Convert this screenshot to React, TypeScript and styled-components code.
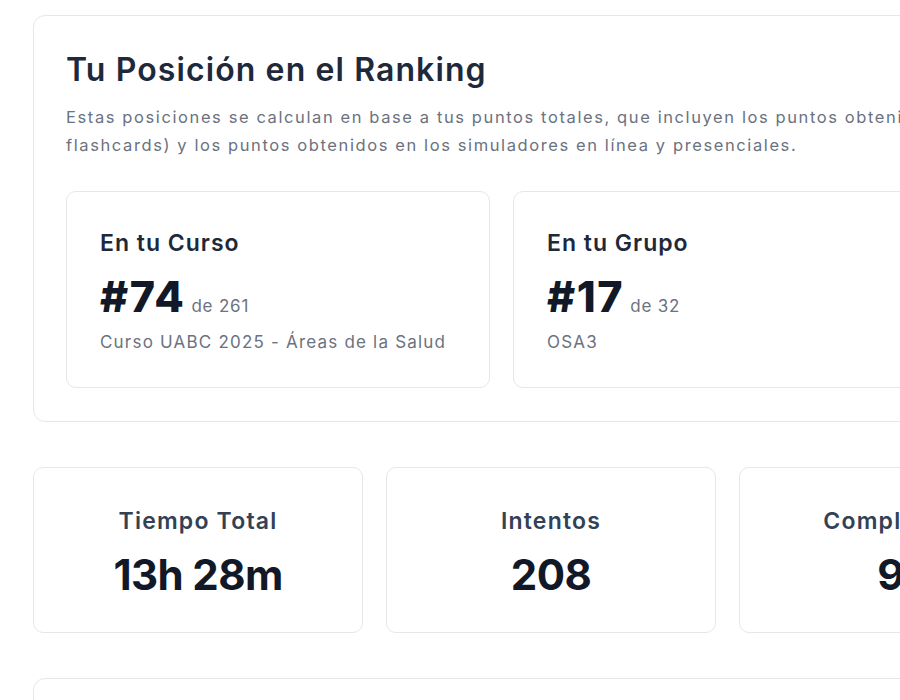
import React from "react";
import styled, { createGlobalStyle } from "styled-components";

const GlobalStyle = createGlobalStyle`
  html, body {
    margin: 0;
    padding: 0;
    background: #ffffff;
    overflow: hidden;
    font-family: "Inter", "Noto Sans", sans-serif;
    color: #1e293b;
  }
`;

const Page = styled.main`
  width: 1100px;
  padding: 15px 0 0 33px;
  display: flex;
  flex-direction: column;
  gap: 45px;
`;

const Panel = styled.section<{ $height?: number }>`
  width: 937px;
  box-sizing: border-box;
  border: 1px solid #e5e7eb;
  border-radius: 12px;
  padding: 34px 32px 33px;
  background: #fff;
  ${(p) => (p.$height ? `height: ${p.$height}px;` : "")}
`;

const Title = styled.h2`
  margin: 0;
  font-size: 32px;
  line-height: 40px;
  font-weight: 600;
  color: #1e293b;
  letter-spacing: 1.1px;
`;

const Lead = styled.p`
  margin: 13px 0 0;
  font-size: 16.5px;
  line-height: 28px;
  color: #6b7280;
  letter-spacing: 1.6px;
  white-space: nowrap;
`;

const RankGrid = styled.div`
  margin-top: 32px;
  display: grid;
  grid-template-columns: repeat(2, 424px);
  gap: 23px;
`;

const RankCard = styled.div`
  box-sizing: border-box;
  height: 197px;
  border: 1px solid #e5e7eb;
  border-radius: 10px;
  padding: 37px 33px 0;
  display: flex;
  flex-direction: column;
`;

const RankLabel = styled.h3`
  margin: 0;
  font-size: 23px;
  line-height: 28px;
  font-weight: 600;
  color: #1e293b;
  letter-spacing: 1px;
`;

const RankValue = styled.div`
  margin-top: 14px;
  display: flex;
  align-items: baseline;
  gap: 6px;
  height: 50px;
`;

const RankNumber = styled.span`
  font-size: 43px;
  line-height: 50px;
  font-weight: 800;
  color: #111827;
  letter-spacing: 1.6px;
`;

const RankTotal = styled.span`
  font-size: 17px;
  color: #6b7280;
  letter-spacing: 0.8px;
`;

const RankNote = styled.div`
  margin-top: 8px;
  font-size: 17px;
  line-height: 26px;
  color: #6b7280;
  letter-spacing: 1.2px;
`;

const StatGrid = styled.div`
  display: grid;
  grid-template-columns: repeat(3, 330px);
  gap: 23px;
`;

const StatCard = styled.div`
  box-sizing: border-box;
  height: 166px;
  border: 1px solid #e5e7eb;
  border-radius: 10px;
  padding-top: 5px;
  display: flex;
  flex-direction: column;
  align-items: center;
  justify-content: center;
  gap: 14px;
`;

const StatLabel = styled.div`
  font-size: 23px;
  line-height: 30px;
  font-weight: 600;
  color: #334155;
  letter-spacing: 1.2px;
`;

const StatValue = styled.div`
  font-size: 42px;
  line-height: 50px;
  font-weight: 700;
  color: #111827;
  letter-spacing: -0.6px;
`;

const ranks = [
  { label: "En tu Curso", pos: 74, total: 261, note: "Curso UABC 2025 - Áreas de la Salud" },
  { label: "En tu Grupo", pos: 17, total: 32, note: "OSA3" },
];

const stats = [
  { label: "Tiempo Total", value: "13h 28m" },
  { label: "Intentos", value: "208" },
  { label: "Completados", value: "96" },
];

export default function App() {
  return (
    <>
      <GlobalStyle />
      <Page>
        <Panel>
          <Title>Tu Posición en el Ranking</Title>
          <Lead>
            Estas posiciones se calculan en base a tus puntos totales, que incluyen los puntos obtenidos en las actividades (quizzes y
            <br />
            flashcards) y los puntos obtenidos en los simuladores en línea y presenciales.
          </Lead>
          <RankGrid>
            {ranks.map((r) => (
              <RankCard key={r.label}>
                <RankLabel>{r.label}</RankLabel>
                <RankValue>
                  <RankNumber>#{r.pos}</RankNumber>
                  <RankTotal>de {r.total}</RankTotal>
                </RankValue>
                <RankNote>{r.note}</RankNote>
              </RankCard>
            ))}
          </RankGrid>
        </Panel>
        <StatGrid>
          {stats.map((s) => (
            <StatCard key={s.label}>
              <StatLabel>{s.label}</StatLabel>
              <StatValue>{s.value}</StatValue>
            </StatCard>
          ))}
        </StatGrid>
        <Panel $height={200} />
      </Page>
    </>
  );
}
